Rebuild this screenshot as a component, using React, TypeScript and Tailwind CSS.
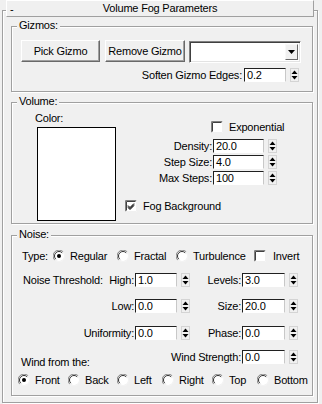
import React from "react";

function Spin() {
  return (
    <svg width="9" height="14" viewBox="0 0 9 14" className="shrink-0 block">
      <rect x="0.5" y="0.5" width="8" height="13" fill="#f0f0f0" stroke="#d4d4d4" />
      <path d="M1.5 6 L4.5 2.5 L7.5 6Z" fill="#000" />
      <path d="M1.5 8 L4.5 11.5 L7.5 8Z" fill="#000" />
    </svg>
  );
}

function Field({ w, v }: { w: string; v: string }) {
  return (
    <div className="flex items-center">
      <div
        className={`${w} h-[14px] bg-white border border-t-[#202020] border-l-[#202020] border-r-[#c8c8c8] border-b-white pl-[2px] leading-[12px] whitespace-nowrap overflow-hidden`}
      >
        {v}
      </div>
      <div className="ml-[4px]">
        <Spin />
      </div>
    </div>
  );
}

function Check({ checked = false }: { checked?: boolean }) {
  return (
    <svg width="12" height="12" viewBox="0 0 12 12" className="shrink-0 block">
      <rect x="0" y="0" width="12" height="12" fill="#fff" />
      <path d="M0.5 11.5 V0.5 H11.5" stroke="#808080" fill="none" />
      <path d="M1.5 10.5 V1.5 H10.5" stroke="#404040" fill="none" />
      <path d="M0.5 11.5 H11.5 V0.5" stroke="#f0f0f0" fill="none" />
      {checked && (
        <path d="M3 5.5 L5 7.5 L9 3.5 M3 6.5 L5 8.5 L9 4.5 M3 7.5 L5 9.5 L9 5.5" stroke="#000" strokeWidth="1" fill="none" />
      )}
    </svg>
  );
}

function Radio({ checked = false }: { checked?: boolean }) {
  return (
    <svg width="12" height="12" viewBox="0 0 12 12" className="shrink-0 block">
      <circle cx="6" cy="6" r="5" fill="#fff" />
      <path d="M10.2 1.8 A5.6 5.6 0 0 0 1.8 10.2" stroke="#808080" fill="none" />
      <path d="M9.2 2.8 A4.5 4.5 0 0 0 2.8 9.2" stroke="#303030" fill="none" />
      <path d="M1.8 10.2 A5.6 5.6 0 0 0 10.2 1.8" stroke="#f4f4f4" fill="none" />
      {checked && <circle cx="6" cy="6" r="2" fill="#000" />}
    </svg>
  );
}

function Opt({ label, checked = false, w }: { label: string; checked?: boolean; w: string }) {
  return (
    <div className={`${w} flex items-center shrink-0`}>
      <Radio checked={checked} />
      <span className="ml-[5px] whitespace-nowrap">{label}</span>
    </div>
  );
}

function Group({ label, className, children }: { label: string; className: string; children: React.ReactNode }) {
  return (
    <div
      className={`relative ml-[8px] w-[302px] border border-[#a0a0a0] shadow-[inset_1px_1px_0_#fff,1px_1px_0_#fff] flex flex-col ${className}`}
    >
      <div className="absolute -top-[8px] left-[5px] px-[2px] bg-[#f0f0f0]">{label}</div>
      {children}
    </div>
  );
}

function Btn({ className, children }: { className: string; children: React.ReactNode }) {
  return (
    <div
      className={`${className} h-[22px] flex items-center justify-center border border-t-white border-l-white border-r-[#696969] border-b-[#696969] shadow-[inset_-1px_-1px_0_#a0a0a0] whitespace-nowrap`}
    >
      {children}
    </div>
  );
}

function VRow({ label, v, className }: { label: string; v: string; className: string }) {
  return (
    <div className={`flex items-center h-[14px] ${className}`}>
      <div className="w-[92px] flex justify-end whitespace-nowrap">{label}</div>
      <div className="ml-[1px]">
        <Field w="w-[51px]" v={v} />
      </div>
    </div>
  );
}

function Right({ label, v }: { label: string; v: string }) {
  return (
    <div className="flex-1 min-w-0 flex items-center justify-end pr-[14px] h-[14px]">
      <span className="whitespace-nowrap">{label}</span>
      <div className="ml-[1px]">
        <Field w="w-[43px]" v={v} />
      </div>
    </div>
  );
}

export default function App() {
  return (
    <div className="w-[322px] h-[404px] bg-[#f0f0f0] overflow-hidden pt-[10px] pl-[2px] font-['Liberation_Sans',Arial,sans-serif] text-[11px] leading-[13px] tracking-[-0.2px] text-black">
      <div className="w-[316px] h-[393px] border border-[#a0a0a0] shadow-[inset_1px_1px_0_#fff,1px_1px_0_#fff] flex flex-col">
        {/* header */}
        <div className="-mt-[11px] ml-[3px] w-[308px] h-[17px] bg-[#f0f0f0] border border-t-white border-l-white border-r-[#a0a0a0] border-b-[#a0a0a0] grid grid-cols-[24px_1fr_24px] items-center">
          <span className="pl-[3px] pt-[2px]">-</span>
          <span className="text-center whitespace-nowrap">Volume Fog Parameters</span>
          <span />
        </div>

        {/* Gizmos */}
        <Group label="Gizmos:" className="mt-[9px] h-[66px]">
          <div className="flex items-start mt-[13px] ml-[9px]">
            <Btn className="w-[79px]">Pick Gizmo</Btn>
            <Btn className="w-[80px] ml-[5px]">Remove Gizmo</Btn>
            <div className="ml-[4px] mt-[1px] w-[112px] h-[22px] bg-white border border-t-[#808080] border-l-[#808080] border-r-white border-b-white shadow-[inset_1px_1px_0_#404040,inset_-1px_-1px_0_#e3e3e3] flex justify-end p-[2px]">
              <div className="w-[13px] h-full bg-[#f0f0f0] border border-t-[#f8f8f8] border-l-[#f8f8f8] border-r-[#696969] border-b-[#696969] flex items-center justify-center">
                <svg width="7" height="4" viewBox="0 0 7 4" className="block">
                  <path d="M0 0 H7 L3.5 4Z" fill="#000" />
                </svg>
              </div>
            </div>
          </div>
          <div className="flex items-center justify-end mt-[5px] pr-[13px] h-[14px]">
            <span className="whitespace-nowrap">Soften Gizmo Edges:</span>
            <div className="ml-[2px]">
              <Field w="w-[42px]" v="0.2" />
            </div>
          </div>
        </Group>

        {/* Volume */}
        <Group label="Volume:" className="mt-[10px] h-[122px]">
          <div className="flex">
            <div className="w-[108px] flex flex-col shrink-0">
              <div className="mt-[9px] ml-[23px]">Color:</div>
              <div className="mt-[2px] ml-[25px] w-[79px] h-[94px] bg-white border border-black" />
            </div>
            <div className="flex flex-col">
              <div className="mt-[17px] ml-[91px] h-[14px] flex items-center">
                <Check />
                <span className="ml-[6px] whitespace-nowrap">Exponential</span>
              </div>
              <VRow label="Density:" v="20.0" className="mt-[5px]" />
              <VRow label="Step Size:" v="4.0" className="mt-[2px]" />
              <VRow label="Max Steps:" v="100" className="mt-[2px]" />
              <div className="mt-[14px] ml-[5px] h-[14px] flex items-center">
                <Check checked />
                <span className="ml-[6px] whitespace-nowrap">Fog Background</span>
              </div>
            </div>
          </div>
        </Group>

        {/* Noise */}
        <Group label="Noise:" className="mt-[11px] h-[161px]">
          <div className="mt-[13px] h-[14px] flex items-center pl-[10px]">
            <span className="w-[31px] shrink-0">Type:</span>
            <Opt label="Regular" checked w="w-[64px]" />
            <Opt label="Fractal" w="w-[59px]" />
            <Opt label="Turbulence" w="w-[78px]" />
            <div className="flex items-center">
              <Check />
              <span className="ml-[7px]">Invert</span>
            </div>
          </div>

          <div className="mt-[10px] h-[14px] flex items-center">
            <div className="w-[178px] flex items-center shrink-0">
              <div className="w-[122px] flex items-center whitespace-nowrap">
                <span className="ml-[11px]">Noise Threshold:</span>
                <span className="ml-auto">High:</span>
              </div>
              <div className="ml-[1px]">
                <Field w="w-[42px]" v="1.0" />
              </div>
            </div>
            <Right label="Levels:" v="3.0" />
          </div>

          <div className="mt-[12px] h-[14px] flex items-center">
            <div className="w-[178px] flex items-center shrink-0">
              <div className="w-[122px] flex justify-end">Low:</div>
              <div className="ml-[1px]">
                <Field w="w-[42px]" v="0.0" />
              </div>
            </div>
            <Right label="Size:" v="20.0" />
          </div>

          <div className="mt-[13px] h-[14px] flex items-center">
            <div className="w-[178px] flex items-center shrink-0">
              <div className="w-[122px] flex justify-end">Uniformity:</div>
              <div className="ml-[1px]">
                <Field w="w-[42px]" v="0.0" />
              </div>
            </div>
            <Right label="Phase:" v="0.0" />
          </div>

          <div className="mt-[10px] flex items-start">
            <div className="w-[140px] shrink-0 pl-[9px] pt-[6px] whitespace-nowrap">Wind from the:</div>
            <Right label="Wind Strength:" v="0.0" />
          </div>

          <div className="mt-[4px] h-[14px] flex items-center pl-[6px]">
            <Opt label="Front" checked w="w-[50px]" />
            <Opt label="Back" w="w-[49px]" />
            <Opt label="Left" w="w-[45px]" />
            <Opt label="Right" w="w-[50px]" />
            <Opt label="Top" w="w-[45px]" />
            <Opt label="Bottom" w="w-[50px]" />
          </div>
        </Group>
      </div>
    </div>
  );
}
